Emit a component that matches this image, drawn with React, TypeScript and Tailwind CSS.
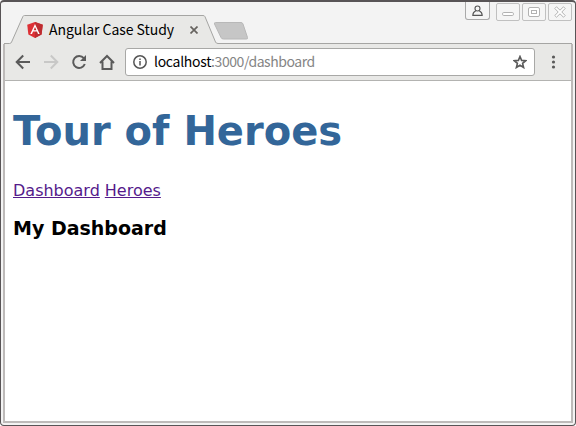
import type { ReactNode } from 'react';

function WindowButton({ children }: { children: ReactNode }) {
  return (
    <button className="flex h-[18px] w-6 items-center justify-center rounded-[2px] border border-[#c0c0c0] bg-[#f5f5f5]">
      {children}
    </button>
  );
}

function AngularLogo() {
  return (
    <svg className="shrink-0" width="16" height="16" viewBox="0 0 16 16">
      <path d="M8 0 15.8 2.7 14.6 12.6 8 16 1.4 12.6.2 2.7Z" fill="#dd3035" />
      <path d="M8 0 15.8 2.7 14.6 12.6 8 16Z" fill="#bd2d31" />
      <path d="M8 1.9 3.3 12H5l1-2.4h4L11 12h1.7ZM8 5l1.4 3.2H6.6Z" fill="#fff" fillRule="evenodd" />
    </svg>
  );
}

function TabStrip() {
  return (
    <header className="relative flex h-[42px] shrink-0">
      <svg className="absolute left-0 top-0" width="568" height="42" viewBox="0 0 568 42" fill="none">
        <path d="M0 42V41H5.5Q7 41 7.6 39.5L18.7 14.5Q19.2 13.5 20.5 13.5H199Q200.5 13.5 201 14.7L211.5 39.5Q212.2 41 214 41H568V42Z" fill="#e8e8e6" />
        <path d="M0 41.5H5.5Q7 41.5 7.6 40L18.9 14.5Q19.4 13.5 20.5 13.5H199Q200.5 13.5 201 14.7L211.5 40Q212.2 41.5 214 41.5H568" stroke="#a5a5a3" />
        <path d="M211.5 20.5H237Q238.5 20.5 239 22L243.5 35.5Q244 37 242.5 37H219.5Q217.5 37 217 35.5L210.5 22Q210 20.5 211.5 20.5Z" fill="#c6c6c6" stroke="#b8b8b8" />
      </svg>
      <div className="relative flex h-7 w-[200px] items-center self-end pl-[23px]">
        <AngularLogo />
        <span className="mb-[2px] ml-[6px] w-[134px] shrink-0 whitespace-nowrap text-[14px] leading-5 tracking-[-0.04px] text-black">Angular Case Study</span>
        <svg className="ml-[7px] shrink-0" width="8" height="8" viewBox="0 0 8 8" stroke="#66635f" strokeWidth="1.7">
          <path d="m.5.5 7 7m0-7-7 7" />
        </svg>
      </div>
      <div className="ml-auto flex items-start">
        <button className="mr-[6px] flex h-[18px] w-[25px] items-center justify-center rounded-b-[3px] border border-t-0 border-[#a9a9a9] bg-[#f5f5f5]">
          <svg width="11" height="12" viewBox="0 0 11 12" fill="none" stroke="#555" strokeWidth="1.1">
            <circle cx="5.5" cy="3.5" r="2.5" />
            <path d="M3.8 5.8C1.8 6.7.8 7.8.8 10.4H10.2C10.2 7.8 9.2 6.7 7.2 5.8" />
          </svg>
        </button>
        <div className="flex gap-[2px] pt-px">
          <WindowButton>
            <svg width="12" height="12" viewBox="0 0 12 12" fill="#fff" stroke="#b2b2b2"><rect x=".5" y="6.5" width="11" height="3" rx="1.3" /></svg>
          </WindowButton>
          <WindowButton>
            <svg width="12" height="12" viewBox="0 0 12 12" fill="#fff" stroke="#b2b2b2"><rect x=".5" y="1.5" width="11" height="9" rx="1.5" /><rect x="3.5" y="4.5" width="5" height="3" /></svg>
          </WindowButton>
          <WindowButton>
            <svg width="12" height="12" viewBox="0 0 12 12" fill="#fff" stroke="#b2b2b2"><path d="M2.5.8 6 4.2 9.5.8 11.2 2.5 7.8 6 11.2 9.5 9.5 11.2 6 7.8 2.5 11.2.8 9.5 4.2 6 .8 2.5Z" /></svg>
          </WindowButton>
        </div>
      </div>
    </header>
  );
}

function Toolbar() {
  return (
    <nav className="flex h-[37px] shrink-0 items-center border-b border-[#b3b3b1] bg-[#e8e8e6] pl-[9px]">
      <svg className="shrink-0" width="107" height="20" viewBox="0 0 107 20" fill="none" stroke="#5a5a5a" strokeWidth="2">
        <path d="M16 10H3M9.2 3.5 2.7 10l6.5 6.5" />
        <path d="M30 10H43M36.8 3.5 43.3 10l-6.5 6.5" stroke="#c8c8c7" />
        <path d="M69.8 6.1A6 6 0 1 0 70.8 12" />
        <path d="M72 3V9H66Z" fill="#5a5a5a" stroke="none" />
        <path d="M86 11 93 4 100 11M88.5 9.5V17H97.5V9.5" />
      </svg>
      <div className="ml-[4px] flex h-7 w-[410px] shrink-0 items-center rounded-[3px] border border-[#a8a8a6] bg-white pl-[7px] pr-[7px]">
        <svg width="14" height="14" viewBox="0 0 14 14" fill="none" stroke="#555" strokeWidth="1.5">
          <circle cx="7" cy="7" r="6.2" />
          <path d="M7 6V10.5M7 3.5V5" />
        </svg>
        <span className="mb-[2px] ml-[7px] whitespace-nowrap text-[14px] leading-5 tracking-[-0.44px] text-[#858585]">
          <span className="tracking-[-0.3px] text-black">localhost</span>:3000/dashboard
        </span>
        <svg className="ml-auto" width="14" height="14" viewBox="0 0 14 14" fill="none" stroke="#5a5a5a" strokeWidth="1.6">
          <path d="m7 1.5 1.6 3.9 4.2.3-3.2 2.7 1 4.1L7 10.3l-3.6 2.2 1-4.1L1.2 5.7l4.2-.3Z" />
        </svg>
      </div>
      <svg className="ml-[16px] shrink-0" width="5" height="14" viewBox="0 0 5 14" fill="#5a5a5a">
        <circle cx="2.5" cy="2" r="1.6" /><circle cx="2.5" cy="7" r="1.6" /><circle cx="2.5" cy="12" r="1.6" />
      </svg>
    </nav>
  );
}

export default function App() {
  return (
    <div className="h-[426px] w-[576px] overflow-hidden bg-white font-['Noto_Sans_CJK_SC','Noto_Sans',sans-serif]">
      <div className="flex h-full flex-col rounded-[4px] border border-t-2 border-[#585456] bg-[#f3f3f3] px-[3px] pb-[2px]">
        <TabStrip />
        <div className="-mx-px flex min-h-0 flex-1 flex-col border-x-2 border-b-2 border-[#bdbab9] bg-white">
          <Toolbar />
          <main className="px-2 pt-[27px] font-['DejaVu_Sans',sans-serif] text-black">
            <h1 className="text-[40px] font-bold leading-[47px] text-[#336699]">Tour of Heroes</h1>
            <nav className="mt-[26px] flex gap-[5px] text-[16px] leading-[19px] text-[#551a8b]">
              <a className="underline" href="#dashboard">Dashboard</a>
              <a className="underline" href="#heroes">Heroes</a>
            </nav>
            <h3 className="mt-[17px] text-[19px] font-bold leading-[22px]">My Dashboard</h3>
          </main>
        </div>
      </div>
    </div>
  );
}
